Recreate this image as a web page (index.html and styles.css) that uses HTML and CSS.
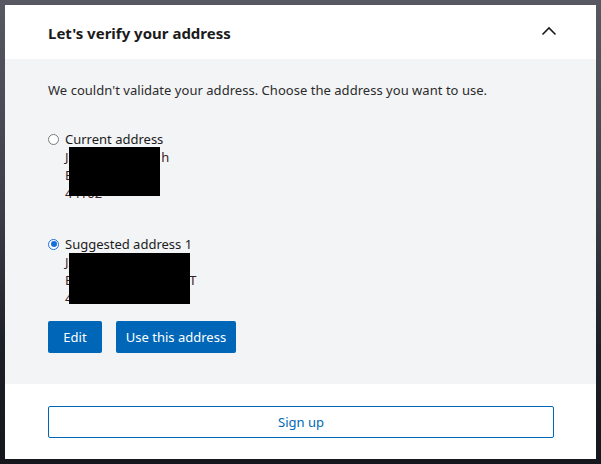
FILE: index.html
```html
<!DOCTYPE html>
<html>
<head>
<meta charset="utf-8">
<link rel="stylesheet" href="styles.css">
</head>
<body>
<div class="card">
  <div class="header">
    <h1 class="title">Let's verify your address</h1>
    <svg class="chevron" width="16" height="10" viewBox="0 0 16 10"><path d="M1.5 8.5 L8 2 L14.5 8.5" fill="none" stroke="#1b1b1b" stroke-width="1.6"/></svg>
  </div>
  <div class="content">
    <p class="intro">We couldn't validate your address. Choose the address you want to use.</p>
    <div class="option opt1">
      <label class="radio-row"><span class="radio"></span><span class="label">Current address</span></label>
      <div class="addr">
        <div class="line">Jxxxxxxxxxxxxx <span class="tail">h</span></div>
        <div class="line">Exxxxxxxx</div>
        <div class="line">44102</div>
        <div class="redact r1"></div>
      </div>
    </div>
    <div class="option opt2">
      <label class="radio-row"><span class="radio checked"></span><span class="label">Suggested address 1</span></label>
      <div class="addr">
        <div class="line">Jxxxxxxxxxxxxxx</div>
        <div class="line">ExxxxxxxxxxxxxxxxxT</div>
        <div class="line">44102</div>
        <div class="redact r2"></div>
      </div>
    </div>
    <div class="actions">
      <button class="btn btn-edit">Edit</button>
      <button class="btn btn-use">Use this address</button>
    </div>
  </div>
  <div class="footer">
    <button class="btn-outline">Sign up</button>
  </div>
</div>
</body>
</html>
```
FILE: styles.css
```css
html, body {
  margin: 0;
  padding: 0;
}
body {
  width: 601px;
  height: 464px;
  background: linear-gradient(to bottom, #585862 0%, #3c3d46 45%, #1d1f26 75%, #15171c 100%);
  font-family: "Noto Sans", "Open Sans", sans-serif;
  overflow: hidden;
}
.card {
  margin: 5px;
  width: 591px;
  height: 454px;
  background: #ffffff;
  display: flex;
  flex-direction: column;
}
.header {
  height: 54px;
  display: flex;
  align-items: center;
  justify-content: space-between;
  padding: 1px 39px 0 43px;
  box-sizing: border-box;
}
.title {
  margin: 0;
  font-size: 15px;
  font-weight: 700;
  color: #1b1b1b;
  letter-spacing: 0;
}
.chevron {
  margin-top: -4px;
}
.content {
  background: #f3f4f6;
  height: 325px;
  box-sizing: border-box;
  padding: 22px 43px 0 43px;
}
.intro {
  margin: 0;
  font-size: 13px;
  line-height: 18px;
  color: #2b2b2b;
  letter-spacing: 0.03px;
}
.option {
  font-size: 13px;
  line-height: 18px;
}
.opt1 { margin-top: 31px; }
.opt2 { margin-top: 33px; }
.radio-row {
  display: flex;
  align-items: center;
}
.radio {
  width: 11px;
  height: 11px;
  box-sizing: border-box;
  border: 1px solid #7a7a7a;
  border-radius: 50%;
  background: #ffffff;
  margin-right: 6px;
  position: relative;
}
.radio.checked {
  border-color: #1a6fd6;
}
.radio.checked::after {
  content: "";
  position: absolute;
  left: 1.5px;
  top: 1.5px;
  width: 6px;
  height: 6px;
  border-radius: 50%;
  background: #1a6fd6;
}
.label {
  color: #1b1b1b;
}
.addr {
  position: relative;
  padding-left: 17px;
  color: #3b1d24;
  white-space: nowrap;
}
.redact {
  position: absolute;
  background: #000000;
}
.r1 {
  left: 21px;
  top: -1px;
  width: 91px;
  height: 49px;
}
.r2 {
  left: 21px;
  top: 0px;
  width: 121px;
  height: 51px;
}
.actions {
  margin-top: 14px;
  display: flex;
  gap: 14px;
}
.btn {
  height: 32px;
  border: none;
  border-radius: 2px;
  background: #0067b8;
  color: #ffffff;
  font-family: "Noto Sans", "Open Sans", sans-serif;
  font-size: 13px;
  padding: 0;
}
.btn-edit { width: 54px; }
.btn-use { width: 120px; }
.footer {
  flex: 1;
  padding: 22px 42px 0 43px;
}
.btn-outline {
  width: 506px;
  height: 32px;
  box-sizing: border-box;
  border: 1px solid #0067b8;
  border-radius: 2px;
  background: #ffffff;
  color: #0067b8;
  font-family: "Noto Sans", "Open Sans", sans-serif;
  font-size: 13px;
}
```
